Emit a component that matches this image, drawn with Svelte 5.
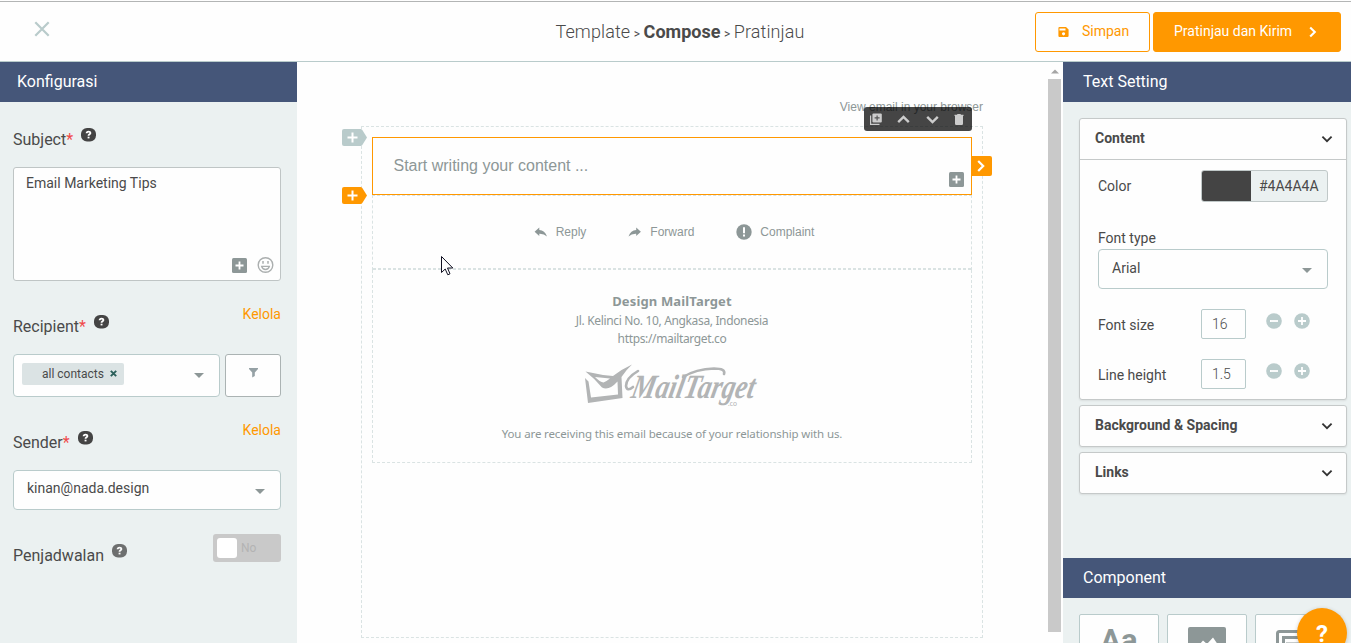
<script>

let subject = "Email Marketing Tips";
let fontSize = 16;
let lineHeight = 1.5;
let color = "#4A4A4A";

const actions = ["Reply", "Forward", "Complaint"];
const sections = ["Background & Spacing", "Links"];

function resize(step) {
	fontSize = Math.max(1, fontSize + step);
}

function respace(step) {
	lineHeight = Math.max(0.5, Math.round((lineHeight + step) * 10) / 10);
}

</script>

<style>

:global(body) {
	margin: 0;
	padding: 0;
	overflow: hidden;
	background-color: #fefefe;
}

.app {
	box-sizing: border-box;
	height: 643px;
	padding-top: 1px;
	display: flex;
	flex-direction: column;
	font-family: Roboto, sans-serif;
	font-size: 14px;
	color: #4a4a4a;
	position: relative;
	overflow: hidden;
}

.app * {
	box-sizing: border-box;
}

svg {
	display: block;
	flex: none;
	overflow: visible;
}

button {
	font: inherit;
	color: inherit;
	background: none;
	border: 0;
	padding: 0;
}

.topbar {
	height: 61px;
	flex: none;
	border-top: 1px solid #b3b5b5;
	border-bottom: 1px solid #b9cbcb;
	display: flex;
	align-items: flex-start;
	justify-content: space-between;
}

.close {
	margin: 19px 0 0 34px;
	width: 291px;
}

.steps {
	margin-top: 18px;
	font-size: 18px;
	line-height: 24px;
	font-weight: 300;
	white-space: nowrap;
	letter-spacing: 0.1px;
}

.steps span {
	font-size: 12px;
	font-weight: 400;
	margin: 0 3.5px 0 3.5px;
}

.steps b {
	font-weight: 700;
	letter-spacing: 0;
}

.buttons {
	display: flex;
	gap: 3px;
	padding: 10px 10px 0 0;
	width: 316px;
}

.buttons button {
	height: 40px;
	border: 1px solid #ff9800;
	border-radius: 3px;
	display: flex;
	align-items: center;
	white-space: nowrap;
	padding-bottom: 2px;
}

.save {
	width: 115px;
	color: #ff9800;
	padding-left: 21px;
	gap: 12px;
}

.buttons .send {
	width: 188px;
	background-color: #ff9800;
	color: #fff;
	padding-left: 20px;
	gap: 17px;
}

.save svg, .send svg {
	position: relative;
	top: 1px;
}

.main {
	flex: 1;
	min-height: 0;
	display: flex;
}

.titulo {
	height: 40px;
	flex: none;
	margin: 0;
	background-color: #455679;
	color: #fff;
	font-size: 16px;
	font-weight: 400;
	line-height: 39px;
}

.config {
	width: 297px;
	flex: none;
	background-color: #ebf1f1;
}

.config .titulo {
	padding-left: 17px;
}

.form {
	padding: 25px 16px 0 13px;
}

.label {
	display: flex;
	font-size: 16px;
	line-height: 26px;
	height: 26px;
}

.label i {
	font-style: normal;
	color: #f04a4a;
}

.label svg {
	margin: 1px 0 0 8px;
}

.label .faded {
	opacity: 0.75;
}

.kelola {
	margin-left: auto;
	font-size: 14px;
	line-height: 14px;
	margin-top: -7px;
	color: #ff9800;
}

.textarea {
	height: 114px;
	margin-top: 14px;
	background-color: #fefefe;
	border: 1px solid #bfc5c5;
	border-radius: 3px;
	display: flex;
	flex-direction: column;
	justify-content: space-between;
	padding: 7px 6.5px 6px 12px;
	line-height: 17px;
}

.tools {
	display: flex;
	justify-content: flex-end;
	align-items: center;
	gap: 10px;
}

.recipient {
	margin-top: 33px;
}

.row {
	display: flex;
	gap: 5px;
	margin-top: 14px;
}

.select {
	display: flex;
	align-items: center;
	justify-content: space-between;
	background-color: #fefefe;
	border: 1px solid #b9cbcb;
	border-radius: 4px;
}

.contacts {
	width: 207px;
	height: 43px;
	padding: 0 15px 4px 8px;
}

.tag {
	display: flex;
	align-items: center;
	width: 102px;
	height: 22px;
	padding-left: 20px;
	gap: 6px;
	border-radius: 2px;
	background-color: #dbe3e4;
	font-size: 12px;
}

.contacts .arrow {
	margin-top: 4px;
}

.filter {
	width: 56px;
	height: 43px;
	display: flex;
	justify-content: center;
	align-items: flex-start;
	padding-top: 13px;
	background-color: #fefefe;
	border: 1px solid #abb3b3;
	border-radius: 3px;
}

.sender-label {
	margin-top: 33px;
}

.sender {
	height: 40px;
	margin-top: 14px;
	padding: 0 15px 4px 13px;
}

.sender .arrow, .font .arrow {
	margin-top: 6px;
}

.schedule {
	display: flex;
	justify-content: space-between;
	margin-top: 24px;
}

.schedule .label {
	margin-top: 9px;
}

.switch {
	width: 68px;
	height: 28px;
	padding: 4px;
	display: flex;
	align-items: center;
	gap: 4px;
	border-radius: 3px;
	background-color: #c9c9c9;
	color: #b3b3b3;
	font-size: 12px;
}

.switch span {
	width: 20px;
	height: 20px;
	border-radius: 3px;
	background-color: #fff;
}

.canvas {
	flex: 1;
	min-width: 0;
	padding: 38px 0 0 64px;
	font-family: "Liberation Sans", Arial, sans-serif;
	color: #8d9797;
}

.browser {
	width: 622px;
	height: 26px;
	line-height: 15px;
	text-align: right;
	font-size: 12px;
}

.sheet {
	width: 622px;
	height: 512px;
	padding: 10px;
	border: 1px dashed #dae3e3;
}

.editor {
	position: relative;
	width: 600px;
	height: 58px;
	padding: 18px 20.5px;
	border: 1px solid #ff9800;
	font-size: 16px;
	line-height: 20px;
}

.toolbar {
	position: absolute;
	right: -1px;
	top: -31px;
	width: 108px;
	height: 24px;
	display: flex;
	align-items: center;
	justify-content: space-between;
	padding: 0 8px 0 6px;
	border-radius: 3px;
	background-color: rgba(0, 0, 0, 0.73);
}

.insert {
	position: absolute;
	left: -31.5px;
}

.insert.before {
	top: -9px;
}

.insert.after {
	top: 49px;
}

.expand {
	position: absolute;
	left: 598px;
	top: 18px;
	width: 20.5px;
	height: 20px;
	display: flex;
	align-items: center;
	justify-content: center;
	background-color: #ff9800;
	border-radius: 0 2px 2px 0;
}

.editor-plus {
	position: absolute;
	right: 7px;
	bottom: 7px;
}

.actions {
	width: 600px;
	height: 75px;
	display: flex;
	justify-content: center;
	align-items: center;
	gap: 42px;
	padding: 0 0 3px 4px;
	border: 1px dashed #dae3e3;
	border-bottom: 0;
	font-size: 12px;
	/* 3px dashes instead of the wider ones of a 2px dashed border */
	background: repeating-linear-gradient(90deg, #dae3e3 0 3px, transparent 3px 5px) bottom / 100% 2px no-repeat;
}

.actions div {
	display: flex;
	align-items: center;
	gap: 8px;
}

.footer {
	width: 600px;
	height: 193px;
	border: 1px dashed #dae3e3;
	border-top: 0;
	padding-top: 21px;
	font-family: "Noto Sans", sans-serif;
	font-size: 12px;
	line-height: 18px;
	text-align: center;
}

.footer p {
	margin: 0;
}

.footer .company {
	font-size: 13px;
	line-height: 21px;
	font-weight: 700;
	letter-spacing: 0.15px;
}

.footer .address {
	letter-spacing: -0.35px;
}

.footer svg {
	margin: 15px 0 0 211px;
}

.footer .reason {
	margin-top: 16px;
	font-size: 11.5px;
	letter-spacing: -0.13px;
}

.scroll {
	width: 15px;
	flex: none;
	display: flex;
	flex-direction: column;
}

.scroll svg {
	margin: 7px 0 5px 3px;
}

.thumb {
	width: 13px;
	height: 553px;
	background-color: #c9c9c9;
}

.settings {
	width: 288px;
	flex: none;
	display: flex;
	flex-direction: column;
	background-color: #ebf1f1;
}

.settings .titulo {
	padding-left: 20px;
}

.panels {
	height: 456px;
	padding: 16px 4px 0 16px;
}

.panel {
	background-color: #fefefe;
	border: 1px solid #c5c9c9;
	border-radius: 3px;
	box-shadow: 0 1px 2px rgba(0, 0, 0, 0.08);
	margin-bottom: 5px;
}

.panel h3 {
	height: 40px;
	margin: 0;
	padding: 0 13px 0 15px;
	display: flex;
	align-items: center;
	justify-content: space-between;
	font-size: 14px;
	font-weight: 700;
}

.panel h3 span {
	padding-bottom: 2px;
}

.open h3 {
	height: 41px;
	border-bottom: 1px solid #c5c9c9;
}

.fields {
	height: 239px;
	padding: 10px 18px 0 18px;
}

.field {
	display: flex;
	align-items: center;
}

.name {
	width: 103px;
	padding-top: 1px;
}

.field:first-child .name {
	padding-top: 0;
}

.color {
	width: 127px;
	height: 32px;
	display: flex;
	border: 1px solid #c0c8c8;
	border-radius: 3px;
	background-color: #ebf1f1;
	line-height: 30px;
	overflow: hidden;
}

.color span {
	width: 49px;
	margin-right: 8px;
	background-color: #444;
}

.type {
	margin-top: 28px;
	line-height: 17px;
}

.font {
	height: 40px;
	margin-top: 2px;
	padding: 0 15px 3px 13px;
}

.size {
	margin-top: 20px;
	height: 30px;
}

.number {
	width: 45px;
	height: 30px;
	padding-left: 10px;
	border: 1px solid #b9cbcb;
	border-radius: 2px;
	font-weight: 300;
	line-height: 29px;
}

.round {
	margin: -6px 0 0 11.5px;
}

.number + .round {
	margin-left: 20px;
}

.components {
	display: flex;
	gap: 8px;
	padding: 16px 0 0 16px;
	overflow: hidden;
	height: 45px;
}

.component {
	width: 80px;
	height: 80px;
	flex: none;
	padding-top: 12px;
	display: flex;
	justify-content: center;
	align-items: flex-start;
	border: 1px solid #b9cbcb;
	border-radius: 2px;
	background-color: #fefefe;
	color: #8d9797;
	font-size: 31px;
	line-height: 28px;
	font-weight: 700;
}

.help {
	position: absolute;
	left: 1297px;
	top: 608px;
	width: 50px;
	height: 50px;
	border-radius: 50%;
	background-color: #ff9800;
	color: #fff;
	font-size: 24px;
	font-weight: 700;
	line-height: 52px;
	text-align: center;
	box-shadow: 0 1px 4px rgba(0, 0, 0, 0.2);
}

.cursor {
	position: absolute;
	left: 441px;
	top: 256px;
}

</style>

{#snippet question(faded)}
	<svg class:faded width="15" height="14" viewBox="0 0 15 14">
		<rect width="15" height="13.4" rx="6" fill="#444" />
		<path d="M5.6 5.2C5.7 3.1 9.5 3.1 9.4 5.1C9.3 6.4 7.5 6.3 7.5 7.8" fill="none" stroke="#fff" stroke-width="1.8" />
		<rect x="6.6" y="8.7" width="1.9" height="1.7" fill="#fff" />
	</svg>
{/snippet}

{#snippet arrow()}
	<svg class="arrow" width="10" height="5" viewBox="0 0 10 5"><path d="M0 0H10L5 5Z" fill="#8d9797" /></svg>
{/snippet}

{#snippet squarePlus(name)}
	<svg class={name} width="15" height="15" viewBox="0 0 15 15">
		<rect width="15" height="15" rx="1.5" fill="#8d9797" />
		<path d="M7.5 3.5V11.5M3.5 7.5H11.5" stroke="#fff" stroke-width="1.8" />
	</svg>
{/snippet}

{#snippet tagPlus(name, fill)}
	<svg class="insert {name}" width="25" height="17" viewBox="0 0 25 17">
		<path d="M2 0H18.5Q19.5 0 20.3 1L25 8.5L20.3 16Q19.5 17 18.5 17H2Q0 17 0 15V2Q0 0 2 0Z" {fill} />
		<path d="M10.5 3.5V13.5M5.5 8.5H15.5" stroke="#fff" stroke-width="2" />
	</svg>
{/snippet}

{#snippet down()}
	<svg width="12" height="8" viewBox="0 0 12 8"><path d="M1.4 1.6L6 6.2L10.6 1.6" fill="none" stroke="#333" stroke-width="1.8" /></svg>
{/snippet}

{#snippet minus()}
	<svg width="16" height="16" viewBox="0 0 16 16"><circle cx="8" cy="8" r="7.8" fill="#b9cbcb" /><path d="M4 8H12" stroke="#fff" stroke-width="1.8" /></svg>
{/snippet}

{#snippet plus()}
	<svg width="16" height="16" viewBox="0 0 16 16"><circle cx="8" cy="8" r="7.8" fill="#b9cbcb" /><path d="M4 8H12M8 4V12" stroke="#fff" stroke-width="1.8" /></svg>
{/snippet}

<div class="app">
	<div class="topbar">
		<div class="close">
			<svg width="16" height="16" viewBox="0 0 16 16"><path d="M1.3 1.3L14.7 14.7M14.7 1.3L1.3 14.7" stroke="#b9cbcb" stroke-width="2.2" /></svg>
		</div>
		<div class="steps">Template<span>&gt;</span><b>Compose</b><span>&gt;</span>Pratinjau</div>
		<div class="buttons">
			<button class="save">
				<svg width="13" height="12" viewBox="0 0 13 12">
					<path fill-rule="evenodd" d="M2.5 1H9L11.6 3.4V9.8Q11.6 11 10.4 11H2.5Q1.4 11 1.4 9.8V2.2Q1.4 1 2.5 1ZM2.5 2.4V4.6H8.5V2.4ZM6.5 6.2A1.6 1.6 0 1 0 6.6 6.2Z" fill="#ff9800" />
				</svg>
				Simpan
			</button>
			<button class="send">
				Pratinjau dan Kirim
				<svg width="8" height="12" viewBox="0 0 8 12"><path d="M1.2 1.4L5.8 6L1.2 10.6" fill="none" stroke="#fff" stroke-width="2.1" /></svg>
			</button>
		</div>
	</div>

	<div class="main">
		<div class="config">
			<h2 class="titulo">Konfigurasi</h2>
			<div class="form">
				<div class="label">Subject<i>*</i>{@render question(false)}</div>
				<div class="textarea">
					{subject}
					<div class="tools">
						{@render squarePlus("")}
						<svg width="17" height="17" viewBox="0 0 17 17">
							<circle cx="8.5" cy="8" r="7.3" fill="none" stroke="#abafaf" stroke-width="1.4" />
							<path d="M6 4V6.7M11 4V6.7" stroke="#abafaf" stroke-width="1.5" />
							<path d="M4.6 9.3H12.4Q11.5 12.5 8.5 12.5Q5.5 12.5 4.6 9.3Z" fill="none" stroke="#abafaf" stroke-width="1.3" />
						</svg>
					</div>
				</div>

				<div class="label recipient">Recipient<i>*</i>{@render question(false)}<span class="kelola">Kelola</span></div>
				<div class="row">
					<div class="select contacts">
						<div class="tag">
							all contacts
							<svg width="7" height="7" viewBox="0 0 7 7"><path d="M0.8 0.8L6.2 6.2M6.2 0.8L0.8 6.2" stroke="#2a5f5a" stroke-width="1.9" /></svg>
						</div>
						{@render arrow()}
					</div>
					<button class="filter" aria-label="Filter">
						<svg width="9" height="10" viewBox="0 0 9 10"><path d="M0 0H9V1L5.8 4.6V8L3.2 9.6V4.6L0 1Z" fill="#95a1a5" /></svg>
					</button>
				</div>

				<div class="label sender-label">Sender<i>*</i>{@render question(false)}<span class="kelola">Kelola</span></div>
				<div class="select sender">kinan@nada.design {@render arrow()}</div>

				<div class="schedule">
					<div class="label">Penjadwalan{@render question(true)}</div>
					<div class="switch"><span></span>No</div>
				</div>
			</div>
		</div>

		<div class="canvas">
			<div class="browser">View email in your browser</div>
			<div class="sheet">
				<div class="editor">
					Start writing your content ...
					{@render tagPlus("before", "#b9cbcb")}
					{@render tagPlus("after", "#ff9800")}
					<div class="toolbar">
						<svg width="12" height="12" viewBox="0 0 12 12">
							<path d="M0.6 2.5V11.4H9.5" fill="none" stroke="#ccc" stroke-width="1.2" />
							<rect x="2.4" y="0.4" width="9.4" height="9" rx="1" fill="#ccc" />
							<path d="M7.1 2.4V7.4M4.6 4.9H9.6" stroke="#555" stroke-width="1.2" />
						</svg>
						<svg width="13" height="9" viewBox="0 0 13 9"><path d="M1.2 7.2L6.5 2L11.8 7.2" fill="none" stroke="#ccc" stroke-width="2.4" /></svg>
						<svg width="13" height="9" viewBox="0 0 13 9"><path d="M1.2 1.8L6.5 7L11.8 1.8" fill="none" stroke="#ccc" stroke-width="2.4" /></svg>
						<svg width="10" height="11" viewBox="0 0 10 11"><path d="M0.5 0.8H3L3.5 0H6.5L7 0.8H9.5V2H9V9.8Q9 11 7.8 11H2.2Q1 11 1 9.8V2H0.5Z" fill="#ccc" /></svg>
					</div>
					<div class="expand">
						<svg width="8" height="12" viewBox="0 0 8 12"><path d="M1.2 1L6.2 6L1.2 11" fill="none" stroke="#fff" stroke-width="2.2" /></svg>
					</div>
					{@render squarePlus("editor-plus")}
				</div>

				<div class="actions">
					{#each actions as action}
						<div>
							{#if action == "Reply"}
								<svg width="14" height="10" viewBox="0 0 14 10"><path d="M5.3 0.4V3Q10.8 3.4 13 9.5Q10 6.5 5.3 6.7V9L0.6 4.7Z" fill="#8d9797" /></svg>
							{:else if action == "Forward"}
								<svg width="14" height="10" viewBox="0 0 14 10"><path d="M8.2 0.4V3Q2.7 3.4 0.5 9.5Q3.5 6.5 8.2 6.7V9L12.9 4.7Z" fill="#8d9797" /></svg>
							{:else}
								<svg width="16" height="16" viewBox="0 0 16 16"><circle cx="8" cy="8" r="7.7" fill="#8d9797" /><path d="M8 3.2V9.2M8 10.6V12.6" stroke="#fff" stroke-width="2" /></svg>
							{/if}
							{action}
						</div>
					{/each}
				</div>

				<div class="footer">
					<p class="company">Design MailTarget</p>
					<p class="address">Jl. Kelinci No. 10, Angkasa, Indonesia</p>
					<p class="address">https://mailtarget.co</p>
					<svg width="174" height="46" viewBox="0 0 174 46">
						<path fill-rule="evenodd" d="M1.5 8.5L19 12L29 13Q38 6 48 1.5Q42 7 37.5 14L38.5 35L4 40L1 15L4.5 18.5L7 34.5L34 31.5L33.5 18.5Q25 28 18 24.5Q10 15 1.5 8.5ZM11 14Q16 19 19.5 19.5Q23 18 26 15.5Z" fill="#b2b4b5" />
						<path d="M54 8Q42 15 42 23Q43 29 49 24" fill="none" stroke="#b2b4b5" stroke-width="2.6" stroke-linecap="round" />
						<g transform="translate(46 35) skewX(-12)">
							<text textLength="123" lengthAdjust="spacingAndGlyphs" font-family="Liberation Serif, serif" font-size="34" font-style="italic" font-weight="700" fill="#b2b4b5">MailTarget</text>
						</g>
						<path d="M99 14Q112 6 130 5.5Q142 5.5 140 11" fill="none" stroke="#b2b4b5" stroke-width="2.6" stroke-linecap="round" />
						<text x="144" y="43" font-family="Lato, sans-serif" font-size="7" fill="#b2b4b5">.co</text>
					</svg>
					<p class="reason">You are receiving this email because of your relationship with us.</p>
				</div>
			</div>
		</div>

		<div class="scroll">
			<svg width="8" height="5" viewBox="0 0 8 5"><path d="M0 4.5L4 0.5L8 4.5Z" fill="#a5a5a5" /></svg>
			<div class="thumb"></div>
		</div>

		<div class="settings">
			<h2 class="titulo">Text Setting</h2>
			<div class="panels">
				<div class="panel open">
					<h3><span>Content</span>{@render down()}</h3>
					<div class="fields">
						<div class="field">
							<div class="name">Color</div>
							<div class="color"><span></span>{color}</div>
						</div>
						<div class="type">Font type</div>
						<div class="select font">Arial {@render arrow()}</div>
						<div class="field size">
							<div class="name">Font size</div>
							<div class="number">{fontSize}</div>
							<button class="round" aria-label="Smaller" on:click={() => resize(-1)}>{@render minus()}</button>
							<button class="round" aria-label="Larger" on:click={() => resize(1)}>{@render plus()}</button>
						</div>
						<div class="field size">
							<div class="name">Line height</div>
							<div class="number">{lineHeight}</div>
							<button class="round" aria-label="Tighter" on:click={() => respace(-0.1)}>{@render minus()}</button>
							<button class="round" aria-label="Looser" on:click={() => respace(0.1)}>{@render plus()}</button>
						</div>
					</div>
				</div>
				{#each sections as section}
					<div class="panel">
						<h3><span>{section}</span>{@render down()}</h3>
					</div>
				{/each}
			</div>

			<h2 class="titulo">Component</h2>
			<div class="components">
				<div class="component">Aa</div>
				<div class="component">
					<svg width="38" height="30" viewBox="0 0 38 30"><rect width="38" height="30" rx="2" fill="#8d9797" /><path d="M5 25L15 13.5L19 17L25 10.5L35 25Z" fill="#fff" /></svg>
				</div>
				<div class="component">
					<svg width="38" height="30" viewBox="0 0 38 30"><rect x="1.5" y="4.5" width="35" height="28" rx="2" fill="none" stroke="#8d9797" stroke-width="3" /><path d="M7.5 9V24M6 10.5H32M10 17H32" fill="none" stroke="#8d9797" stroke-width="3" /></svg>
				</div>
			</div>
		</div>
	</div>

	<div class="help">?</div>
	<svg class="cursor" width="13" height="21" viewBox="0 0 13 21"><path d="M0.5 0.5V16.5L4.2 13L6.8 18.8L9 17.8L6.5 12H11.8Z" fill="#fff" stroke="#112" stroke-width="1" /></svg>
</div>
